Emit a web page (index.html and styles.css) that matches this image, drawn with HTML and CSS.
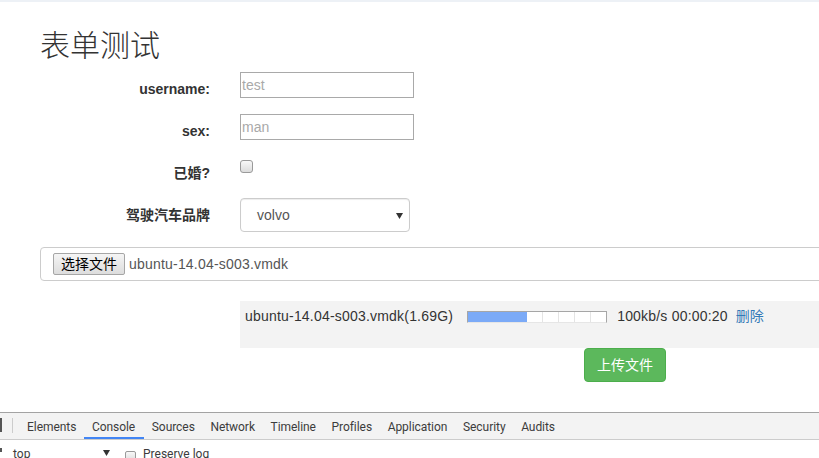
FILE: index.html
```html
<!DOCTYPE html>
<html lang="zh-CN">
<head>
<meta charset="utf-8">
<title>表单测试</title>
<link rel="stylesheet" href="styles.css">
</head>
<body>
<div class="topbar"></div>
<main class="page">
  <h1 class="title">表单测试</h1>
  <form class="form">
    <div class="row">
      <label class="lbl">username:</label>
      <input class="txt" type="text" placeholder="test">
    </div>
    <div class="row">
      <label class="lbl">sex:</label>
      <input class="txt" type="text" placeholder="man">
    </div>
    <div class="row">
      <label class="lbl">已婚?</label>
      <span class="check"></span>
    </div>
    <div class="row">
      <label class="lbl">驾驶汽车品牌</label>
      <div class="select">
        <span class="select-val">volvo</span>
        <svg class="select-arrow" width="7" height="6" viewBox="0 0 7 6"><path d="M0 0H7L3.5 6Z" fill="#333"/></svg>
      </div>
    </div>
  </form>
  <div class="filebox">
    <span class="filebtn">选择文件</span>
    <span class="fname">ubuntu-14.04-s003.vmdk</span>
  </div>
  <div class="queue">
    <span class="qname">ubuntu-14.04-s003.vmdk(1.69G)</span>
    <span class="bar">
      <span class="fill" style="width:59px"></span>
      <span class="seg first"></span><span class="seg"></span><span class="seg"></span><span class="seg"></span><span class="seg"></span>
    </span>
    <span class="speed">100kb/s 00:00:20</span>
    <a class="del">删除</a>
  </div>
  <div class="actions">
    <button class="upload" type="button">上传文件</button>
  </div>
</main>
<div class="devtools">
  <div class="dt-tabs">
    <span class="dt-icon"></span>
    <span class="dt-sep"></span>
    <span class="tab">Elements</span>
    <span class="tab active">Console</span>
    <span class="tab">Sources</span>
    <span class="tab">Network</span>
    <span class="tab">Timeline</span>
    <span class="tab">Profiles</span>
    <span class="tab">Application</span>
    <span class="tab">Security</span>
    <span class="tab">Audits</span>
  </div>
  <div class="dt-row">
    <span class="dt-mark"></span>
    <span class="ctx"><span>top</span><svg width="7" height="6" viewBox="0 0 7 6"><path d="M0 0H7L3.5 6Z" fill="#333"/></svg></span>
    <span class="dt-check"></span>
    <span class="dt-label">Preserve log</span>
  </div>
</div>
</body>
</html>
```
FILE: styles.css
```css
html, body {
  margin: 0;
  padding: 0;
  overflow: hidden;
  background: #fff;
}
body {
  font-family: "Liberation Sans", "Noto Sans CJK SC", sans-serif;
  font-size: 14px;
  color: #333;
  width: 819px;
}
.topbar {
  height: 2px;
  background: #edf1f6;
}
.page {
  height: 410px;
  box-sizing: border-box;
  padding: 24px 0 0 40px;
  overflow: hidden;
}
.title {
  margin: 0;
  font-family: "Noto Sans CJK SC", sans-serif;
  font-weight: 300;
  font-size: 30px;
  line-height: 34px;
  color: #333;
}
.form {
  margin: 12px 0 0 0;
}
.row {
  display: flex;
  align-items: flex-start;
  margin-bottom: 15px;
}
.lbl {
  width: 170px;
  margin-right: 30px;
  text-align: right;
  font-weight: bold;
  padding-top: 7px;
  line-height: 20px;
  font-size: 14px;
}
.txt {
  box-sizing: border-box;
  width: 174px;
  height: 26px;
  margin: 0;
  border: 1px solid #a9a9a9;
  padding: 0 1px;
  font-family: "Liberation Sans", sans-serif;
  font-size: 14px;
  color: #333;
  outline: none;
}
.txt::placeholder {
  color: #a9a9a9;
}
.check {
  box-sizing: border-box;
  width: 13px;
  height: 13px;
  margin-top: 4px;
  border: 1px solid #9a9a9a;
  border-radius: 3px;
  background: linear-gradient(#f8f8f8, #dcdcdc);
}
.select {
  box-sizing: border-box;
  width: 170px;
  height: 34px;
  border: 1px solid #ccc;
  border-radius: 4px;
  box-shadow: inset 0 1px 1px rgba(0,0,0,.075);
  display: flex;
  align-items: center;
  justify-content: space-between;
  padding: 0 6px 0 16px;
  color: #555;
  font-size: 14px;
}
.select-arrow {
  display: block;
  margin-top: 1px;
}
.filebox {
  box-sizing: border-box;
  width: 800px;
  height: 34px;
  border: 1px solid #ccc;
  border-radius: 4px;
  padding: 0 12px;
  display: flex;
  align-items: center;
}
.filebtn {
  box-sizing: border-box;
  height: 22px;
  padding: 0 7px;
  border: 1px solid #a6a6a6;
  border-radius: 2px;
  background: linear-gradient(#f5f5f5, #dddddd);
  line-height: 20px;
  color: #000;
  font-size: 14px;
}
.fname {
  margin-left: 4px;
  color: #555;
  letter-spacing: 0.2px;
}
.queue {
  box-sizing: border-box;
  margin: 20px 0 0 200px;
  width: 600px;
  height: 47px;
  background: #f3f3f3;
  padding: 5px 5px;
  display: flex;
  align-items: flex-start;
  line-height: 20px;
}
.qname, .speed {
  letter-spacing: 0.2px;
  color: #333;
}
.bar {
  box-sizing: border-box;
  display: flex;
  width: 140px;
  height: 12px;
  margin: 5px 0 0 14px;
  border: 1px solid #a6a6a6;
  border-bottom-color: #e6e6e6;
  background: #fff;
}
.fill {
  display: block;
  height: 100%;
  background: #7baaf7;
}
.seg {
  flex: 1;
  border-left: 1px solid #e4e4e4;
}
.seg.first {
  border-left: none;
}
.speed {
  margin-left: 10px;
}
.del {
  margin-left: 8px;
  color: #337ab7;
  cursor: pointer;
}
.actions {
  padding-left: 544px;
}
.upload {
  box-sizing: border-box;
  height: 34px;
  padding: 6px 12px;
  border: 1px solid #4cae4c;
  border-radius: 4px;
  background: #5cb85c;
  color: #fff;
  font-family: "Liberation Sans", "Noto Sans CJK SC", sans-serif;
  font-size: 14px;
  line-height: 20px;
}
.devtools {
  border-top: 1px solid #a3a3a3;
  font-family: Roboto, "Liberation Sans", sans-serif;
  font-size: 12px;
  color: #3c3c3c;
}
.dt-tabs {
  height: 26px;
  background: #f3f3f3;
  border-bottom: 1px solid #ccc;
  display: flex;
  align-items: flex-start;
}
.dt-icon {
  width: 2px;
  height: 14px;
  margin-top: 5px;
  background: #555;
}
.dt-sep {
  width: 1px;
  height: 15px;
  margin: 5px 6px 0 10px;
  background: #ccc;
}
.tab {
  box-sizing: border-box;
  height: 26px;
  padding: 4px 7.6px 0 8px;
  line-height: 20px;
  white-space: nowrap;
  letter-spacing: -0.05px;
}
.tab.active {
  border-bottom: 2px solid #4285f4;
  padding-right: 8.6px;
}
.dt-row {
  display: flex;
  align-items: flex-start;
  height: 24px;
  line-height: 20px;
  padding-top: 4px;
  box-sizing: border-box;
}
.dt-mark {
  width: 2px;
  height: 4px;
  margin-top: 4px;
  background: #555;
}
.ctx {
  box-sizing: border-box;
  width: 100px;
  margin-left: 11px;
  display: flex;
  justify-content: space-between;
  align-items: flex-start;
  padding-right: 3px;
}
.ctx svg {
  margin-top: 6px;
}
.dt-check {
  box-sizing: border-box;
  width: 11px;
  height: 11px;
  margin: 7px 0 0 12px;
  border: 1px solid #9a9a9a;
  border-radius: 2px;
  background: linear-gradient(#f8f8f8, #dcdcdc);
}
.dt-label {
  margin-left: 7px;
}
```
